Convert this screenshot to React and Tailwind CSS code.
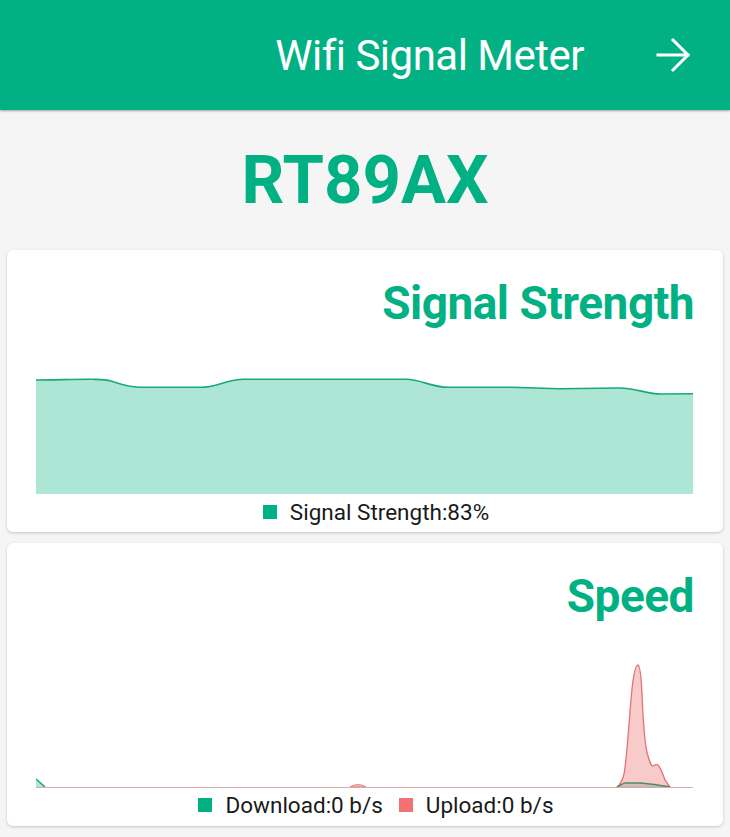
import React from 'react';

const GREEN = '#02b183';

const signalLine =
  'M0 0 C20 0 40 -1 57 -0.7 C65 -0.5 70 -0.5 75 1 C90 6 95 7.3 110 7.3 L165 7.3 C180 7.3 190 0 206 -0.7 L370 -0.7 C385 -0.7 395 7.3 412 7.3 L476 7.3 L523 8.7 L583 8 C600 8 610 14 625 14 L657 13.7';

const Header = () => (
  <div className="h-[110px] bg-[#02b183] flex items-center justify-end shadow-[0_1px_2px_rgba(0,0,0,0.35)]">
    <span className="text-white text-[42px] leading-none tracking-[-0.5px] mt-[2px]">Wifi Signal Meter</span>
    <svg className="w-9 h-9 ml-[72px] mr-[38px]" viewBox="0 0 36 36" fill="none" stroke="white" strokeWidth="3" strokeLinecap="square">
      <path d="M2 18h30M17 3l15 15-15 15" />
    </svg>
  </div>
);

const Legend = ({ items, className }) => (
  <div className={'flex justify-center items-center gap-4 pl-[22px] text-[22.5px] leading-[22px] text-[#1a1a1a] ' + className}>
    {items.map((it) => (
      <div key={it.label} className="flex items-center gap-[13px]">
        <span className="w-[14px] h-[14px]" style={{ background: it.color }} />
        <span>{it.label}</span>
      </div>
    ))}
  </div>
);

const SignalCard = () => (
  <div className="bg-white rounded-md mx-[7px] h-[282px] shadow-[0_1px_3px_rgba(0,0,0,0.2)] pt-[30px] px-[29px]">
    <h2 className="text-right text-[46px] font-bold leading-none tracking-[-0.5px] text-[#02b183]">Signal Strength</h2>
    <svg className="block w-[657px] h-[130px] mt-[38px]" viewBox="0 -16 657 130" preserveAspectRatio="none">
      <path d={signalLine + ' L657 114 L0 114 Z'} fill="#ade6d5" />
      <path d={signalLine} fill="none" stroke="#17a97a" strokeWidth="1.6" />
    </svg>
    <Legend className="mt-[7px]" items={[{ label: 'Signal Strength:83%', color: GREEN }]} />
  </div>
);

const SpeedCard = () => (
  <div className="bg-white rounded-md mx-[7px] mt-[11px] h-[283px] shadow-[0_1px_3px_rgba(0,0,0,0.2)] pt-[30px] px-[29px]">
    <h2 className="text-right text-[46px] font-bold leading-none tracking-[-0.5px] text-[#02b183]">Speed</h2>
    <svg className="block w-[657px] h-[140px] mt-[30px]" viewBox="0 0 657 140" preserveAspectRatio="none">
      {/* upload */}
      <path d="M0 134 C3 135 5 137 8 138 L0 138 Z" fill="#f9caca" stroke="#e07474" strokeWidth="1" />
      <path d="M314 138 C318 135 326 135 330 138 Z" fill="#f9caca" stroke="#e07474" strokeWidth="1" />
      <path
        d="M581 138 C584 136 586 133 588 125 C591 110 593 70 596 40 C598 22 600 16 602 16 C604 16 605 25 606 45 C607 70 609 98 612 107 C614 114 615 117 617 117 C619 116 621 115 622 116 C625 119 627 126 629 131 L634 138 Z"
        fill="#f9caca"
        stroke="#e07474"
        strokeWidth="1.3"
      />
      {/* download */}
      <path d="M0 130 L9 138 L0 138 Z" fill="#b6e6d6" />
      <path d="M0 130 L9 138" stroke="#17a97a" strokeWidth="1.6" fill="none" />
      <path d="M581 138 C585 136 588 133 592 134 L604 134 C612 135 624 136 634 138 Z" fill="#c2bfb4" fillOpacity="0.8" />
      <path d="M581 138 C585 136 588 133 592 134 L604 134 C612 135 624 136 634 138" stroke="#4c8a64" strokeWidth="1.5" fill="none" />
      <line x1="0" y1="138.5" x2="657" y2="138.5" stroke="#d9a8a8" strokeWidth="1" />
    </svg>
    <Legend
      className="mt-[5px]"
      items={[
        { label: 'Download:0 b/s', color: GREEN },
        { label: 'Upload:0 b/s', color: '#f47171' },
      ]}
    />
  </div>
);

export default function App() {
  return (
    <div className="w-[730px] h-[837px] bg-[#f5f5f5] overflow-hidden" style={{ fontFamily: 'Roboto, sans-serif' }}>
      <Header />
      <h1 className="text-center text-[67px] font-bold leading-none text-[#02b183] mt-[37px] mb-[36px]">RT89AX</h1>
      <SignalCard />
      <SpeedCard />
    </div>
  );
}
